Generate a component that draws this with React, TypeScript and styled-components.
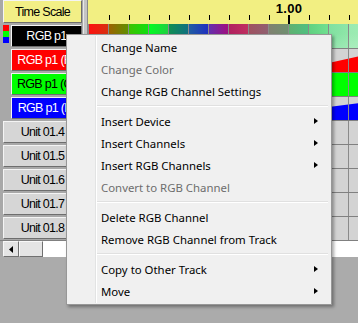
import React from "react";
import styled, { createGlobalStyle, css } from "styled-components";

const GlobalStyle = createGlobalStyle`
  html, body {
    margin: 0;
    padding: 0;
    background: #ababab;
    overflow: hidden;
  }
  body {
    font-family: "Liberation Sans", Arial, sans-serif;
  }
`;

const Window = styled.div`
  position: relative;
  width: 358px;
  height: 323px;
  background: #ababab;
  overflow: hidden;
`;

const Grid = styled.div`
  display: grid;
  grid-template-columns: 83px 5px 1fr;
  background: #a8a8a8;
`;

const LeftCell = styled.div`
  height: 24px;
  display: flex;
  align-items: flex-start;
  padding-top: 1px;
  padding-left: 3px;
  box-sizing: border-box;
`;

const Bevel = css`
  box-sizing: border-box;
  height: 22px;
  border: 1px solid;
  border-color: #f4f4f4 #6e6e6e #6e6e6e #f4f4f4;
  display: flex;
  align-items: center;
  justify-content: center;
  font-size: 12.5px;
  letter-spacing: -0.7px;
  white-space: nowrap;
  overflow: hidden;
`;

const HeaderButton = styled.div`
  ${Bevel};
  width: 79px;
  background: #f2ef86;
  color: #000;
  margin-top: -1px;
  height: 23px;
`;

const UnitButton = styled.div`
  ${Bevel};
  width: 79px;
  background: #d6d6d6;
  color: #000;
`;

const ChannelButton = styled.div<{ $bg: string; $fg: string; $flush?: boolean }>`
  ${Bevel};
  width: 71px;
  margin-left: ${(p) => (p.$flush ? "0" : "8px")};
  background: ${(p) => p.$bg};
  color: ${(p) => p.$fg};
`;

const Swatch = styled.div`
  width: 6px;
  display: flex;
  flex-direction: column;
  margin-right: 2px;
`;

const SwatchBit = styled.span<{ $c: string }>`
  display: block;
  height: 6px;
  background: ${(p) => p.$c};
`;

const Splitter = styled.div`
  background: #c4c4c4;
  border-left: 1px solid #e8e8e8;
  border-right: 1px solid #8a8a8a;
  box-sizing: border-box;
`;

const Ruler = styled.div`
  height: 24px;
  background: #f2ef82;
  svg {
    display: block;
  }
`;

const Track = styled.div<{ $bg?: string; $top?: boolean }>`
  height: 24px;
  box-sizing: border-box;
  position: relative;
  background: ${(p) => p.$bg || "#d3d3d3"};
  border-top: ${(p) => (p.$top ? "none" : "1px solid #808080")};
  overflow: hidden;
  &::after {
    content: "";
    position: absolute;
    inset: 0;
    background-image: repeating-linear-gradient(
      to right,
      #8a8a8a 0 1px,
      transparent 1px 20px
    );
    pointer-events: none;
  }
  svg {
    position: absolute;
    inset: 0;
  }
`;

const ScrollRow = styled.div`
  display: flex;
  height: 17px;
  background: #fff;
  border-top: 1px solid #808080;
  box-sizing: border-box;
`;

const ScrollGap = styled.div`
  width: 3px;
  background: #a8a8a8;
`;

const ScrollArrow = styled.div`
  width: 16px;
  box-sizing: border-box;
  background: #e4e4e4;
  border: 1px solid;
  border-color: #f8f8f8 #707070 #707070 #f8f8f8;
  display: flex;
  align-items: center;
  justify-content: center;
`;

const ScrollThumb = styled.div`
  width: 24px;
  box-sizing: border-box;
  background: #e4e4e4;
  border: 1px solid;
  border-color: #f8f8f8 #707070 #707070 #f8f8f8;
`;

/* context menu */

const Menu = styled.div`
  position: absolute;
  left: 66px;
  top: 34px;
  width: 266px;
  box-sizing: border-box;
  background: #f0f0f0;
  border: 1px solid #979797;
  padding: 1px 2px 2px 2px;
  box-shadow: 2px 2px 3px rgba(0, 0, 0, 0.35);
  font-family: "Noto Sans", "Open Sans", sans-serif;
  font-size: 11.4px;
  &::before {
    content: "";
    position: absolute;
    top: 1px;
    bottom: 1px;
    left: 28px;
    width: 1px;
    background: #e2e3e3;
    border-right: 1px solid #ffffff;
  }
`;

const Item = styled.div<{ $disabled?: boolean }>`
  position: relative;
  height: 22px;
  display: flex;
  align-items: center;
  padding-left: 32px;
  color: ${(p) => (p.$disabled ? "#6d6d6d" : "#000")};
  white-space: nowrap;
`;

const Arrow = styled.span`
  position: absolute;
  right: 11px;
  top: 8px;
  width: 0;
  height: 0;
  border-top: 3.5px solid transparent;
  border-bottom: 3.5px solid transparent;
  border-left: 4px solid #000;
`;

const Separator = styled.div`
  height: 8px;
  display: flex;
  align-items: center;
  padding-left: 28px;
  padding-right: 1px;
  &::after {
    content: "";
    flex: 1;
    height: 1px;
    background: #e0e0e0;
    border-bottom: 1px solid #fff;
  }
`;

type MenuEntry =
  | { sep: true }
  | { label: string; disabled?: boolean; sub?: boolean };

const menuItems: MenuEntry[] = [
  { label: "Change Name" },
  { label: "Change Color", disabled: true },
  { label: "Change RGB Channel Settings" },
  { sep: true },
  { label: "Insert Device", sub: true },
  { label: "Insert Channels", sub: true },
  { label: "Insert RGB Channels", sub: true },
  { label: "Convert to RGB Channel", disabled: true },
  { sep: true },
  { label: "Delete RGB Channel" },
  { label: "Remove RGB Channel from Track" },
  { sep: true },
  { label: "Copy to Other Track", sub: true },
  { label: "Move", sub: true },
];

// colour of the combined RGB channel per 20px cell
const cells = [
  ["#ff1010", "#d83010"],
  ["#a06000", "#609000"],
  ["#40c000", "#10e010"],
  ["#00ff20", "#20d040"],
  ["#109050", "#107080"],
  ["#2060a0", "#2030c0"],
  ["#6030b0", "#a01080"],
  ["#b02060", "#c03060"],
  ["#a05060", "#906070"],
  ["#808070", "#709070"],
  ["#60b070", "#50c080"],
  ["#60d080", "#70e090"],
  ["#80e0a0", "#8ee6a8"],
  ["#98eab0", "#a0ecb4"],
];

const stripGradient =
  "linear-gradient(to bottom, rgba(255,255,255,0) 0, rgba(255,255,255,0) 9px, rgba(255,255,255,0.15) 24px), linear-gradient(to right, " +
  cells
    .map(([a, b], i) => `${a} ${i * 20}px, ${b} ${i * 20 + 20}px`)
    .join(", ") +
  ")";

const units = ["Unit 01.4", "Unit 01.5", "Unit 01.6", "Unit 01.7", "Unit 01.8"];

function RulerMarks() {
  const ticks = [];
  for (let x = 21; x < 280; x += 20) {
    const major = x === 201;
    ticks.push(
      <rect
        key={x}
        x={major ? x - 1 : x}
        y={15}
        width={major ? 2 : 1}
        height={major ? 9 : 5}
        fill="#000"
      />
    );
  }
  return (
    <svg width="270" height="24">
      {ticks}
      <text
        x={201}
        y={13}
        textAnchor="middle"
        fontFamily="Liberation Sans, Arial, sans-serif"
        fontWeight="bold"
        fontSize="13"
        letterSpacing="0.3"
      >
        1.00
      </text>
    </svg>
  );
}

function Ramp({ color, from, slope }: { color: string; from: number; slope: number }) {
  // intensity ramp for a single channel, baseline at bottom of the cell
  const w = 270;
  const top = Math.max(0, 23 - (w - from) * slope);
  return (
    <svg width={w} height="23">
      <polygon points={`${from},23 ${w},${top} ${w},23`} fill={color} />
    </svg>
  );
}

export default function App() {
  return (
    <Window>
      <GlobalStyle />
      <Grid>
        <LeftCell>
          <HeaderButton>Time Scale</HeaderButton>
        </LeftCell>
        <Splitter />
        <Ruler>
          <RulerMarks />
        </Ruler>

        <LeftCell>
          <Swatch>
            <SwatchBit $c="#ff0000" />
            <SwatchBit $c="#00ff00" />
            <SwatchBit $c="#0000ff" />
          </Swatch>
          <ChannelButton $bg="#000" $fg="#fff" $flush>
            RGB p1
          </ChannelButton>
        </LeftCell>
        <Splitter />
        <Track $top $bg={stripGradient} />

        <LeftCell>
          <ChannelButton $bg="#ff0000" $fg="#fff">
            RGB p1 (R)
          </ChannelButton>
        </LeftCell>
        <Splitter />
        <Track>
          <Ramp color="#ff0000" from={200} slope={0.22} />
        </Track>

        <LeftCell>
          <ChannelButton $bg="#00ff00" $fg="#000">
            RGB p1 (G)
          </ChannelButton>
        </LeftCell>
        <Splitter />
        <Track $bg="#00ff00" />

        <LeftCell>
          <ChannelButton $bg="#0000ff" $fg="#fff">
            RGB p1 (B)
          </ChannelButton>
        </LeftCell>
        <Splitter />
        <Track>
          <Ramp color="#0000ff" from={139} slope={0.127} />
        </Track>

        {units.map((u) => (
          <React.Fragment key={u}>
            <LeftCell>
              <UnitButton>{u}</UnitButton>
            </LeftCell>
            <Splitter />
            <Track />
          </React.Fragment>
        ))}
      </Grid>

      <ScrollRow>
        <ScrollGap />
        <ScrollArrow>
          <svg width="4" height="7" viewBox="0 0 4 7">
            <polygon points="4,0 0,3.5 4,7" fill="#000" />
          </svg>
        </ScrollArrow>
        <ScrollThumb />
      </ScrollRow>

      <Menu>
        {menuItems.map((m, i) =>
          "sep" in m ? (
            <Separator key={i} />
          ) : (
            <Item key={i} $disabled={m.disabled}>
              {m.label}
              {m.sub && <Arrow />}
            </Item>
          )
        )}
      </Menu>
    </Window>
  );
}
